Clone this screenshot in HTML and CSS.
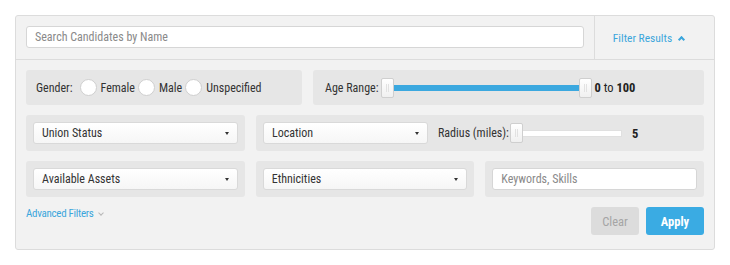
FILE: index.html
```html
<!DOCTYPE html>
<html lang="en">
<head>
  <meta charset="UTF-8">
  <meta name="viewport" content="width=device-width, initial-scale=1.0">
  <title>Search Candidates</title>
  <link rel="stylesheet" href="styles.css">
</head>
<body>
  <div class="panel">
    <div class="panel-head">
      <div class="search-wrap">
        <input type="text" class="search" placeholder="Search Candidates by Name">
      </div>
      <div class="toggle">Filter Results <span class="up-caret"></span></div>
    </div>
    <div class="panel-body">
      <div class="row">
        <div class="box gender">
          <span class="label">Gender:</span>
          <span class="radio"></span><span class="opt">Female</span>
          <span class="radio"></span><span class="opt">Male</span>
          <span class="radio"></span><span class="opt">Unspecified</span>
        </div>
        <div class="box age">
          <span class="label">Age Range:</span>
          <div class="slider">
            <span class="handle"></span>
            <span class="fill"></span>
            <span class="handle"></span>
          </div>
          <span class="value"><b>0</b> to <b>100</b></span>
        </div>
      </div>
      <div class="row">
        <div class="box col">
          <div class="select">Union Status <span class="caret"></span></div>
        </div>
        <div class="box location">
          <div class="select loc">Location <span class="caret"></span></div>
          <span class="label">Radius (miles):</span>
          <div class="slider radius">
            <span class="handle"></span>
            <span class="track"></span>
          </div>
          <span class="value"><b>5</b></span>
        </div>
      </div>
      <div class="row">
        <div class="box col">
          <div class="select">Available Assets <span class="caret"></span></div>
        </div>
        <div class="box col">
          <div class="select">Ethnicities <span class="caret"></span></div>
        </div>
        <div class="box col">
          <input type="text" class="keywords" placeholder="Keywords, Skills">
        </div>
      </div>
      <div class="foot">
        <a class="advanced" href="#">Advanced Filters <span class="down-caret"></span></a>
        <div class="buttons">
          <button type="button" class="btn clear">Clear</button>
          <button type="button" class="btn apply">Apply</button>
        </div>
      </div>
    </div>
  </div>
</body>
</html>
```

FILE: styles.css
```css
body {
  margin: 0;
  background: #fff;
  font-family: "Roboto Condensed", Roboto, "Liberation Sans", sans-serif;
  font-size: 12px;
  color: #333;
}

.panel {
  margin: 15px 0 0 15px;
  width: 698px;
  height: 233px;
  background: #f2f2f2;
  border: 1px solid #dcdcdc;
  border-radius: 3px;
}

.panel-head {
  display: flex;
  height: 43px;
  border-bottom: 1px solid #dcdcdc;
}

.search-wrap {
  flex: 1;
  padding: 10px 10px 0 10px;
  border-right: 1px solid #dcdcdc;
}

.search,
.keywords {
  width: 100%;
  height: 22px;
  box-sizing: border-box;
  border: 1px solid #d6d6d6;
  border-radius: 3px;
  background: #fff;
  padding: 0 8px;
  font-family: inherit;
  font-size: 12px;
  outline: none;
}

.search::placeholder,
.keywords::placeholder {
  color: #8a8a8a;
}

.toggle {
  width: 119px;
  display: flex;
  align-items: center;
  justify-content: center;
  gap: 7px;
  color: #3ba6dc;
  font-size: 11.5px;
  padding-right: 12px;
  box-sizing: border-box;
}

.up-caret {
  width: 3px;
  height: 3px;
  border-left: 2px solid #3ba6dc;
  border-top: 2px solid #3ba6dc;
  transform: rotate(45deg);
  margin-top: 3px;
}

.panel-body {
  padding: 10px 10px 0 10px;
  display: flex;
  flex-direction: column;
  gap: 10px;
}

.row {
  display: flex;
  gap: 11px;
}

.box {
  background: #e6e6e6;
  border-radius: 3px;
  height: 36px;
  box-sizing: border-box;
  display: flex;
  align-items: center;
  padding: 0 7px;
}

.row:first-child .box {
  height: 35px;
}

.gender {
  width: 276px;
  padding-left: 10px;
}

.gender .label {
  margin-right: 7px;
}

.radio {
  width: 15px;
  height: 15px;
  border: 1px solid #cfcfcf;
  border-radius: 50%;
  background: #fff;
  margin-right: 4px;
}

.opt {
  margin-right: 3px;
}

.age {
  flex: 1;
  padding-left: 12px;
}

.slider {
  display: flex;
  align-items: center;
}

.age .slider {
  width: 211px;
  margin-left: 2px;
}

.handle {
  width: 11px;
  height: 18px;
  border: 1px solid #cfcfcf;
  border-radius: 2px;
  background: linear-gradient(#fff, #f0f0f0);
  position: relative;
  flex: none;
}

.handle::after {
  content: "";
  position: absolute;
  left: 4px;
  top: 5px;
  width: 1px;
  height: 8px;
  border-left: 1px solid #e2e2e2;
  border-right: 1px solid #e2e2e2;
}

.fill {
  flex: 1;
  height: 6px;
  background: #3ba8df;
}

.value {
  margin-left: 3px;
  font-size: 12.5px;
  color: #222;
}

.value b {
  font-weight: 700;
}

.col {
  width: 219px;
}

.select {
  flex: 1;
  height: 22px;
  box-sizing: border-box;
  border: 1px solid #d9d9d9;
  border-radius: 3px;
  background: linear-gradient(#fff, #f6f6f6);
  display: flex;
  align-items: center;
  justify-content: space-between;
  padding: 0 8px;
  color: #333;
}

.caret {
  width: 0;
  height: 0;
  border-left: 2.5px solid transparent;
  border-right: 2.5px solid transparent;
  border-top: 3px solid #333;
}

.location {
  flex: 1;
}

.select.loc {
  flex: none;
  width: 165px;
  margin-right: 10px;
}

.location .label {
  margin-right: 1px;
}

.radius {
  width: 112px;
}

.track {
  flex: 1;
  height: 5px;
  background: #fff;
  border: 1px solid #e0e0e0;
  border-left: none;
}

.location .value {
  margin-left: 10px;
}

.foot {
  display: flex;
  justify-content: space-between;
  align-items: flex-start;
}

.advanced {
  color: #3ba6dc;
  text-decoration: none;
  font-size: 11px;
  letter-spacing: -0.3px;
  margin-top: 0;
  display: flex;
  align-items: center;
  gap: 5px;
}

.down-caret {
  width: 3px;
  height: 3px;
  border-right: 1px solid #b8b8b8;
  border-bottom: 1px solid #b8b8b8;
  transform: rotate(45deg);
  margin-top: -2px;
}

.buttons {
  display: flex;
  gap: 7px;
}

.btn {
  height: 28px;
  border: none;
  border-radius: 3px;
  font-family: inherit;
  font-size: 12.5px;
  cursor: pointer;
}

.clear {
  width: 48px;
  background: #dcdcdc;
  color: #a5a5a5;
}

.apply {
  width: 58px;
  background: #3aabe3;
  color: #fff;
  font-weight: 700;
}
```
